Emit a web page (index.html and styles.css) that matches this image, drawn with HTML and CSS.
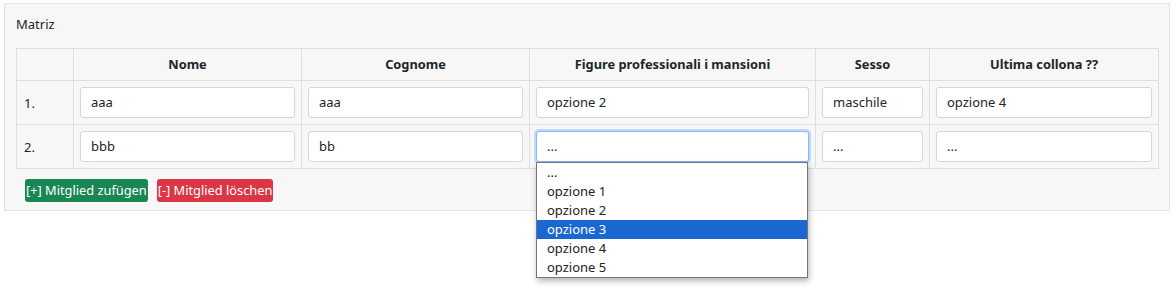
FILE: index.html
```html
<!DOCTYPE html>
<html lang="it">
<head>
<meta charset="utf-8">
<title>Matriz</title>
<link rel="stylesheet" href="styles.css">
</head>
<body>
<div class="panel">
  <div class="title">Matriz</div>
  <table class="matrix">
    <colgroup>
      <col class="c-num"><col class="c-nome"><col class="c-cogn"><col class="c-fig"><col class="c-sesso"><col class="c-ult">
    </colgroup>
    <thead>
      <tr>
        <th></th>
        <th>Nome</th>
        <th>Cognome</th>
        <th>Figure professionali i mansioni</th>
        <th>Sesso</th>
        <th>Ultima collona ??</th>
      </tr>
    </thead>
    <tbody>
      <tr>
        <td class="num">1.</td>
        <td><div class="field">aaa</div></td>
        <td><div class="field">aaa</div></td>
        <td><div class="field">opzione 2</div></td>
        <td><div class="field">maschile</div></td>
        <td><div class="field">opzione 4</div></td>
      </tr>
      <tr>
        <td class="num">2.</td>
        <td><div class="field">bbb</div></td>
        <td><div class="field">bb</div></td>
        <td>
          <div class="select-wrap">
            <div class="field focus">...</div>
            <ul class="listbox">
              <li>...</li>
              <li>opzione 1</li>
              <li>opzione 2</li>
              <li class="sel">opzione 3</li>
              <li>opzione 4</li>
              <li>opzione 5</li>
            </ul>
          </div>
        </td>
        <td><div class="field">...</div></td>
        <td><div class="field">...</div></td>
      </tr>
    </tbody>
  </table>
  <div class="actions">
    <span class="btn btn-add">[+] Mitglied zufügen</span>
    <span class="btn btn-del">[-] Mitglied löschen</span>
  </div>
</div>
</body>
</html>
```

FILE: styles.css
```css
* { box-sizing: border-box; }
html, body { margin: 0; padding: 0; background: #fff; }
html { min-height: 289px; }
body {
  font-family: "Noto Sans", "Open Sans", sans-serif;
  font-size: 13px;
  color: #212529;
  padding: 3px 6px 0 4px;
  min-height: 289px;
}
.panel {
  background: #f7f7f7;
  border: 1px solid #e4e4e4;
  padding: 10px 11px 8px 11px;
  width: 1166px;
}
.title {
  line-height: 20px;
  margin-bottom: 14px;
}
.matrix {
  border-collapse: collapse;
  width: 1142px;
  table-layout: fixed;
}
.c-num { width: 57px; }
.c-nome { width: 228px; }
.c-cogn { width: 228px; }
.c-fig { width: 286px; }
.c-sesso { width: 114px; }
.c-ult { width: 229px; }
.matrix th, .matrix td {
  border: 1px solid #dedede;
  padding: 6px;
}
.matrix th {
  font-weight: 700;
  font-size: 12.8px;
  text-align: center;
  height: 32px;
  padding-top: 4px;
  padding-bottom: 5px;
}
.matrix td.num {
  padding-left: 7px;
  vertical-align: middle;
}
.field {
  height: 31px;
  background: #fff;
  border: 1px solid #d3d6da;
  border-radius: 3px;
  padding: 0 10px;
  line-height: 29px;
  white-space: nowrap;
  overflow: hidden;
}
.field.focus {
  border-color: #86b7fe;
  box-shadow: 0 0 0 2px rgba(13, 110, 253, 0.22);
}
.select-wrap { position: relative; }
.listbox {
  position: absolute;
  left: 0;
  top: 31px;
  width: 272px;
  margin: 0;
  padding: 0;
  list-style: none;
  background: #fff;
  border: 1px solid #767676;
  box-shadow: 1px 3px 6px rgba(0, 0, 0, 0.3);
  z-index: 5;
}
.listbox li {
  height: 19px;
  line-height: 19px;
  padding-left: 10px;
  color: #222;
}
.listbox li.sel {
  background: #1a67d2;
  color: #fff;
}
.actions {
  display: flex;
  gap: 9px;
  margin-top: 10px;
  padding-left: 9px;
}
.btn {
  display: inline-block;
  height: 23px;
  line-height: 22px;
  padding: 0 1px;
  border-radius: 3px;
  color: #fff;
  font-size: 12.8px;
  white-space: nowrap;
}
.btn-add { background: #198754; }
.btn-del { background: #dc3545; }
```
